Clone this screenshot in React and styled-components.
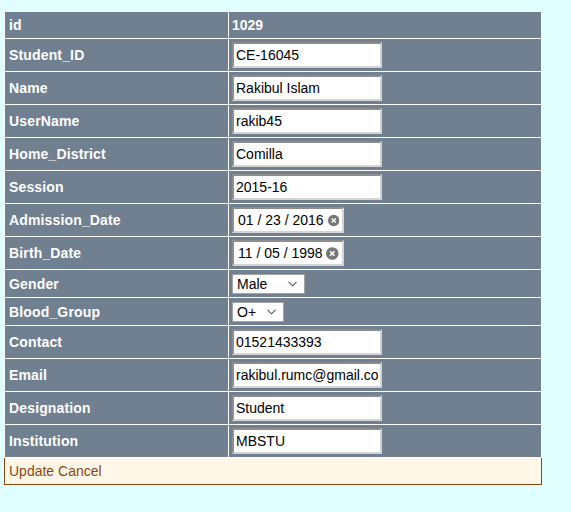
import React from "react";
import styled, { createGlobalStyle } from "styled-components";

const GlobalStyle = createGlobalStyle`
  html, body {
    margin: 0;
    background: #e0ffff;
    font-family: "Liberation Sans", Arial, sans-serif;
  }
`;

const Page = styled.div`
  padding: 11px 0 0 4px;
  min-height: 512px;
  box-sizing: border-box;
`;

const Grid = styled.table`
  width: 538px;
  border-collapse: collapse;
  background: #708090;
  font-size: 14px;
`;

const Row = styled.tr`
  height: ${(p) => p.$h || 33}px;
`;

const Label = styled.td`
  width: 215px;
  padding: 0 4px;
  border: 1px solid #ffffff;
  color: #ffffff;
  font-weight: bold;
  letter-spacing: 0.15px;
  vertical-align: middle;
`;

const Value = styled.td`
  padding: 0 3px;
  border: 1px solid #ffffff;
  color: #ffffff;
  font-weight: ${(p) => (p.$bold ? "bold" : "normal")};
  vertical-align: middle;
`;

const TextBox = styled.input`
  display: block;
  width: 150px;
  height: 26px;
  box-sizing: border-box;
  margin: 0;
  padding: 1px 2px;
  border: 2px solid;
  border-color: #8d8d8d #d4d4d4 #d4d4d4 #8d8d8d;
  background: #ffffff;
  color: #000000;
  font: 14px "Liberation Sans", Arial, sans-serif;
  outline: none;
`;

const DateBox = styled.div`
  display: flex;
  align-items: center;
  justify-content: space-between;
  width: 112px;
  height: 26px;
  box-sizing: border-box;
  padding: 0 3px 0 4px;
  border: 2px solid;
  border-color: #8d8d8d #d4d4d4 #d4d4d4 #8d8d8d;
  background: #ffffff;
  color: #000000;
  font-weight: normal;
  font-size: 14px;
  white-space: pre;
`;

const SelectBox = styled.div`
  display: flex;
  align-items: center;
  justify-content: space-between;
  width: ${(p) => p.$w}px;
  height: 20px;
  box-sizing: border-box;
  padding: 0 7px 0 4px;
  border: 1px solid #a3a3a3;
  background: #ffffff;
  color: #000000;
  font-weight: normal;
  font-size: 14px;
`;

const Footer = styled.td`
  height: 26px;
  padding: 0 4px;
  background: #fff7e7;
  color: #8c4510;
  border: 1px solid #8c4510;
  border-top: none;
  vertical-align: middle;
`;

const ClearIcon = () => (
  <svg width="13" height="13" viewBox="0 0 13 13">
    <circle cx="6.5" cy="6.5" r="6.5" fill="#767676" />
    <path d="M4.2 4.2 L8.8 8.8 M8.8 4.2 L4.2 8.8" stroke="#fff" strokeWidth="1.7" />
  </svg>
);

const Chevron = () => (
  <svg width="9" height="6" viewBox="0 0 9 6">
    <path d="M0.5 0.8 L4.5 4.8 L8.5 0.8" fill="none" stroke="#555" strokeWidth="1.1" />
  </svg>
);

const textRows = [
  ["Student_ID", "CE-16045"],
  ["Name", "Rakibul Islam"],
  ["UserName", "rakib45"],
  ["Home_District", "Comilla"],
  ["Session", "2015-16"],
];

const moreRows = [
  ["Contact", "01521433393"],
  ["Email", "rakibul.rumc@gmail.com"],
  ["Designation", "Student"],
  ["Institution", "MBSTU"],
];

const TextRow = ({ label, value }) => (
  <Row>
    <Label>{label}</Label>
    <Value>
      <TextBox defaultValue={value} readOnly />
    </Value>
  </Row>
);

const App = () => {
  return (
    <Page>
      <GlobalStyle />
      <Grid>
        <tbody>
          <Row $h={27}>
            <Label>id</Label>
            <Value $bold>1029</Value>
          </Row>
          {textRows.map(([l, v]) => (
            <TextRow key={l} label={l} value={v} />
          ))}
          <Row>
            <Label>Admission_Date</Label>
            <Value>
              <DateBox>
                01 / 23 / 2016 <ClearIcon />
              </DateBox>
            </Value>
          </Row>
          <Row>
            <Label>Birth_Date</Label>
            <Value>
              <DateBox>
                11 / 05 / 1998 <ClearIcon />
              </DateBox>
            </Value>
          </Row>
          <Row $h={28}>
            <Label>Gender</Label>
            <Value>
              <SelectBox $w={73}>
                Male <Chevron />
              </SelectBox>
            </Value>
          </Row>
          <Row $h={28}>
            <Label>Blood_Group</Label>
            <Value>
              <SelectBox $w={52}>
                O+ <Chevron />
              </SelectBox>
            </Value>
          </Row>
          {moreRows.map(([l, v]) => (
            <TextRow key={l} label={l} value={v} />
          ))}
          <tr>
            <Footer colSpan={2}>Update Cancel</Footer>
          </tr>
        </tbody>
      </Grid>
    </Page>
  );
};

export default App;
